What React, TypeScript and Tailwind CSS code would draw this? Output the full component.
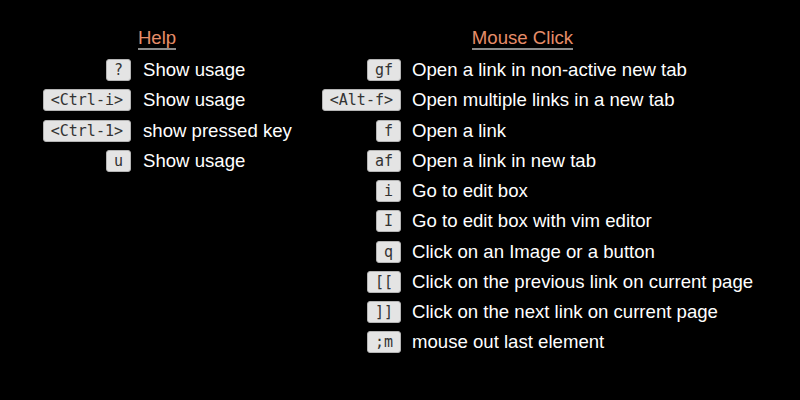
type Binding = { keys: string; desc: string };

const help: Binding[] = [
  { keys: "?", desc: "Show usage" },
  { keys: "<Ctrl-i>", desc: "Show usage" },
  { keys: "<Ctrl-1>", desc: "show pressed key" },
  { keys: "u", desc: "Show usage" },
];

const mouseClick: Binding[] = [
  { keys: "gf", desc: "Open a link in non-active new tab" },
  { keys: "<Alt-f>", desc: "Open multiple links in a new tab" },
  { keys: "f", desc: "Open a link" },
  { keys: "af", desc: "Open a link in new tab" },
  { keys: "i", desc: "Go to edit box" },
  { keys: "I", desc: "Go to edit box with vim editor" },
  { keys: "q", desc: "Click on an Image or a button" },
  { keys: "[[", desc: "Click on the previous link on current page" },
  { keys: "]]", desc: "Click on the next link on current page" },
  { keys: ";m", desc: "mouse out last element" },
];

function Kbd({ children }: { children: string }) {
  return (
    <kbd className="inline-block h-[22px] whitespace-pre rounded-[3px] border border-[#b4b4b4] bg-[#e4e4e4] px-[7px] font-['DejaVu_Sans_Mono',monospace] text-[15px] leading-[20px] text-[#333]">
      {children}
    </kbd>
  );
}

function Section({
  title,
  items,
  keyCol,
  gap,
  headerWidth,
}: {
  title: string;
  items: Binding[];
  keyCol: string;
  gap: string;
  headerWidth: string;
}) {
  return (
    <section className="flex flex-col">
      <div className={`${headerWidth} text-center`}>
        <h2 className="inline-block border-b-2 border-[#8c8c8c] text-[18.6px] leading-[20px] font-normal text-[#e68d69]">
          {title}
        </h2>
      </div>
      <div className={`mt-[8px] grid ${keyCol} ${gap} gap-y-[8.25px]`}>
        {items.map((b) => (
          <div key={b.keys} className="contents">
            <div className="flex h-[22px] justify-end">
              <Kbd>{b.keys}</Kbd>
            </div>
            <div className="flex h-[22px] items-center whitespace-nowrap text-[18.6px] text-white">
              {b.desc}
            </div>
          </div>
        ))}
      </div>
    </section>
  );
}

export default function App() {
  return (
    <div className="flex h-[400px] w-[800px] bg-black pt-[27px] pl-[42px] font-['Liberation_Sans',Arial,sans-serif]">
      <div className="w-[280px]">
        <Section
          title="Help"
          items={help}
          keyCol="grid-cols-[89px_auto]"
          gap="gap-x-[12px]"
          headerWidth="w-[230px]"
        />
      </div>
      <Section
        title="Mouse Click"
        items={mouseClick}
        keyCol="grid-cols-[79px_auto]"
        gap="gap-x-[11px]"
        headerWidth="w-[401px]"
      />
    </div>
  );
}
